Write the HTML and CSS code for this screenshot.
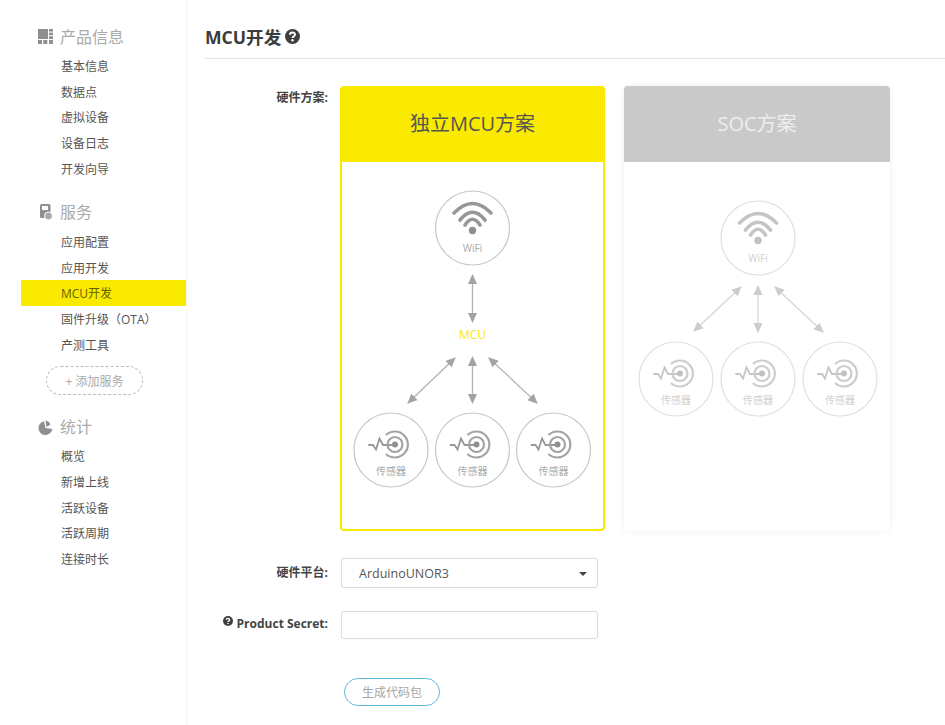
FILE: index.html
```html
<!DOCTYPE html>
<html lang="en">
<head>
  <meta charset="UTF-8" />
  <title>MCU开发</title>
  <link rel="stylesheet" href="styles.css">
</head>
<body>
  <div class="sidebar">
    <div class="group-title">
      <svg class="group-icon" width="15" height="15" viewBox="0 0 15 15">
        <rect x="0" y="0" width="10" height="10"/>
        <rect x="11" y="0" width="4" height="2.6"/>
        <rect x="11" y="3.6" width="4" height="2.6"/>
        <rect x="11" y="7.2" width="4" height="2.8"/>
        <rect x="0" y="11" width="4" height="4"/>
        <rect x="5.3" y="11" width="4" height="4"/>
        <rect x="11" y="11" width="4" height="4"/>
      </svg>
      <span>产品信息</span>
    </div>
    <a class="nav-item">基本信息</a>
    <a class="nav-item">数据点</a>
    <a class="nav-item">虚拟设备</a>
    <a class="nav-item">设备日志</a>
    <a class="nav-item">开发向导</a>

    <div class="group-title second">
      <svg class="group-icon" width="15" height="16" viewBox="0 0 15 16">
        <rect x="2" y="0" width="10.5" height="14" rx="1.5"/>
        <rect x="4" y="2" width="6" height="4" fill="#fff"/>
        <circle cx="10.5" cy="12" r="4" fill="#a8a8a8" stroke="#fff"/>
      </svg>
      <span>服务</span>
    </div>
    <a class="nav-item">应用配置</a>
    <a class="nav-item">应用开发</a>
    <a class="nav-item active">MCU开发</a>
    <a class="nav-item">固件升级（OTA）</a>
    <a class="nav-item">产测工具</a>
    <button class="add-service">+ 添加服务</button>

    <div class="group-title third">
      <svg class="group-icon" width="15" height="16" viewBox="0 0 15 16">
        <path d="M7.5 9 L14.4 10 A7 7 0 1 1 6 2.2 Z"/>
        <path d="M7.5 1.5 A6.5 6.5 0 0 1 12.5 5.5 L8.5 8 Z"/>
      </svg>
      <span>统计</span>
    </div>
    <a class="nav-item">概览</a>
    <a class="nav-item">新增上线</a>
    <a class="nav-item">活跃设备</a>
    <a class="nav-item">活跃周期</a>
    <a class="nav-item">连接时长</a>
  </div>

  <div class="main">
    <div class="page-title">
      <h1>MCU开发</h1>
      <svg width="15" height="15" viewBox="0 0 15 15">
        <circle class="help-disc" cx="7.5" cy="7.5" r="7.5"/>
        <path class="help-mark" d="M5 5.8 C5 2.8 10 2.8 10 5.6 C10 7.4 7.5 7.2 7.5 9"/>
        <circle cx="7.5" cy="11.3" r="1.2" fill="#fff"/>
      </svg>
    </div>

    <div class="form-row first">
      <div class="form-label top">硬件方案:</div>
      <div class="cards">
        <div class="card selected">
          <div class="card-head">独立MCU方案</div>
          <div class="card-body">
            <svg width="261" height="367" viewBox="342 162 261 367">
              <defs>
                <marker id="tip" viewBox="0 0 10 10" refX="9" refY="5" markerUnits="userSpaceOnUse" markerWidth="10" markerHeight="10" orient="auto-start-reverse">
                  <path d="M0 0.5 L10 5 L0 9.5 Z" fill="#a3a3a3"/>
                </marker>
                <g id="wifi">
                  <circle class="ring" r="37"/>
                  <path class="wave" d="M-18.5 -15 Q0 -34 18.5 -15"/>
                  <path class="wave" d="M-12.5 -8 Q0 -23.4 12.5 -8"/>
                  <path class="wave" d="M-7.5 -3 Q0 -14.4 7.5 -3"/>
                  <circle class="dot" cy="2.5" r="3.7"/>
                  <text class="node-label" y="24">WiFi</text>
                </g>
                <g id="sensor">
                  <circle class="ring" r="37"/>
                  <path class="pulse" d="M-22.7 -5 L-18 -5 L-15 -0.5 L-11.5 -11.5 L-8 -5 L4 -5"/>
                  <path class="target" d="M-5 -15 A13 13 0 1 1 -5 4"/>
                  <circle class="target" cx="4" cy="-5.5" r="7.5"/>
                  <circle class="dot" cx="4" cy="-5.5" r="3"/>
                  <text class="node-label" y="25">传感器</text>
                </g>
              </defs>
              <use href="#wifi" x="472.5" y="228"/>
              <line class="link" x1="472.5" y1="275" x2="472.5" y2="322"/>
              <text class="mcu-label" x="472.5" y="339">MCU</text>
              <line class="link" x1="455" y1="358" x2="408" y2="403"/>
              <line class="link" x1="472.5" y1="357" x2="472.5" y2="403"/>
              <line class="link" x1="489" y1="358" x2="537" y2="403"/>
              <use href="#sensor" x="391" y="450"/>
              <use href="#sensor" x="472.5" y="450"/>
              <use href="#sensor" x="553.5" y="450"/>
            </svg>
          </div>
        </div>

        <div class="card">
          <div class="card-head">SOC方案</div>
          <div class="card-body">
            <svg class="faded" width="266" height="369" viewBox="624 162 266 369">
              <use href="#wifi" x="758" y="238"/>
              <line class="link" x1="741" y1="287" x2="694" y2="331"/>
              <line class="link" x1="758" y1="286" x2="758" y2="332"/>
              <line class="link" x1="775" y1="287" x2="823" y2="332"/>
              <use href="#sensor" x="676" y="379"/>
              <use href="#sensor" x="758" y="379"/>
              <use href="#sensor" x="840" y="379"/>
            </svg>
          </div>
        </div>
      </div>
    </div>

    <div class="form-row platform">
      <div class="form-label">硬件平台:</div>
      <div class="select-wrap">
        <select class="field">
          <option>ArduinoUNOR3</option>
        </select>
      </div>
    </div>

    <div class="form-row secret">
      <div class="form-label">
        <svg width="10" height="10" viewBox="0 0 15 15">
          <circle class="help-disc" cx="7.5" cy="7.5" r="7.5"/>
          <path class="help-mark" d="M5 5.8 C5 2.8 10 2.8 10 5.6 C10 7.4 7.5 7.2 7.5 9"/>
          <circle cx="7.5" cy="11.3" r="1.2" fill="#fff"/>
        </svg>
        Product Secret:
      </div>
      <input class="field short" type="text">
    </div>

    <div class="form-row action">
      <div></div>
      <button class="generate">生成代码包</button>
    </div>
  </div>
</body>
</html>
```

FILE: styles.css
```css
body {
  margin: 0;
  background: #fff;
  font-family: "Open Sans", "Noto Sans CJK SC", sans-serif;
  color: #555;
  display: flex;
  min-height: 725px;
}

/* Left menu */
.sidebar {
  width: 165px;
  padding: 20px 0 0 21px;
  border-right: 1px solid #f6f6f6;
  flex-shrink: 0;
}

.group-title {
  height: 33px;
  padding-left: 17px;
  display: flex;
  align-items: center;
  gap: 7px;
  font-size: 16px;
  color: #aaa;
}

.group-title span {
  margin-bottom: 2px;
}

.group-title.second {
  margin-top: 14.5px;
}

.group-title.third {
  margin-top: 15px;
}

.group-icon {
  fill: #8f8f8f;
  flex-shrink: 0;
}

.nav-item {
  display: block;
  height: 25.7px;
  line-height: 27.7px;
  padding-left: 40px;
  font-size: 12px;
  color: #555;
}

.nav-item.active {
  background: #f9ea00;
  color: #665f00;
}

.add-service {
  display: block;
  width: 97px;
  height: 29px;
  margin: 9px 0 0 25px;
  padding: 0;
  background: #fff;
  border: 1px dashed #bbb;
  border-radius: 15px;
  font: inherit;
  font-size: 12px;
  color: #aaa;
}

/* Main area */
.main {
  flex: 1;
  padding-left: 18px;
}

.page-title {
  height: 44px;
  padding-top: 14px;
  border-bottom: 1px solid #e4e4e4;
  display: flex;
  align-items: center;
  gap: 4px;
}

.page-title h1 {
  margin: 0;
  font-size: 17.6px;
  font-weight: 700;
  color: #3c3c3c;
}

.help-disc {
  fill: #3f3f3f;
}

.help-mark {
  fill: none;
  stroke: #fff;
  stroke-width: 2;
}

.form-row {
  display: grid;
  grid-template-columns: 123px 1fr;
  column-gap: 12px;
  align-items: center;
}

.form-row.first {
  margin-top: 27px;
  align-items: start;
}

.form-row.platform {
  margin-top: 27px;
}

.form-row.secret {
  margin-top: 23px;
}

.form-row.action {
  margin-top: 39px;
}

.form-label {
  font-size: 12px;
  font-weight: 700;
  color: #444;
  text-align: right;
}

.platform .form-label {
  margin-bottom: 2px;
}

.secret .form-label {
  margin-bottom: 4px;
}

.form-label.top {
  margin-top: 2px;
}

.form-label svg {
  margin-bottom: 2px;
}

/* Scheme cards */
.cards {
  display: flex;
  gap: 19px;
}

.card {
  width: 266px;
  height: 445px;
  border-radius: 4px;
  background: #fff;
  box-shadow: 0 0 6px rgba(0, 0, 0, 0.07);
  display: flex;
  flex-direction: column;
}

.card.selected {
  width: 265px;
  box-shadow: none;
}

.card-head {
  height: 76px;
  line-height: 76px;
  flex-shrink: 0;
  text-align: center;
  font-size: 20px;
  color: #eee;
  background: #c9c9c9;
  border-radius: 4px 4px 0 0;
}

.selected .card-head {
  background: #f9ea00;
  color: #555;
}

.card-body {
  flex: 1;
}

.card-body svg {
  display: block;
}

.selected .card-body {
  border: 2px solid #f9ea00;
  border-top: none;
  border-radius: 0 0 4px 4px;
}

.faded {
  opacity: 0.55;
}

/* Diagram */
.ring {
  fill: #fff;
  stroke: #c8c8c8;
  stroke-width: 1.2;
}

.wave {
  fill: none;
  stroke: #979797;
  stroke-width: 3.6;
  stroke-linecap: round;
}

.dot {
  fill: #8f8f8f;
}

.pulse {
  fill: none;
  stroke: #979797;
  stroke-width: 1.8;
}

.target {
  fill: none;
  stroke: #a3a3a3;
  stroke-width: 2.2;
}

.node-label {
  font-size: 10px;
  fill: #aaa;
  text-anchor: middle;
}

.mcu-label {
  font-size: 12px;
  fill: #f7e81a;
  text-anchor: middle;
}

.link {
  stroke: #b4b4b4;
  stroke-width: 1.3;
  marker-start: url(#tip);
  marker-end: url(#tip);
}

/* Fields */
.select-wrap {
  position: relative;
  width: 257px;
  margin-left: 1px;
}

.select-wrap::after {
  content: "";
  position: absolute;
  right: 11px;
  top: 14px;
  border: 4px solid transparent;
  border-top-color: #444;
  border-bottom: none;
}

.field {
  display: block;
  width: 257px;
  height: 30px;
  box-sizing: border-box;
  padding: 0 0 0 17px;
  background: #fff;
  border: 1px solid #ddd;
  border-radius: 3px;
  box-shadow: 0 0 2px rgba(0, 0, 0, 0.06);
  font: inherit;
  font-size: 12.5px;
  color: #555;
  appearance: none;
  outline: none;
}

.field.short {
  height: 28px;
  margin-left: 1px;
}

.generate {
  display: block;
  width: 96px;
  height: 28px;
  margin-left: 4px;
  padding: 0;
  background: #fff;
  border: 1px solid #5db8dd;
  border-radius: 14px;
  font: inherit;
  font-size: 12px;
  color: #a5a5a5;
}
```
